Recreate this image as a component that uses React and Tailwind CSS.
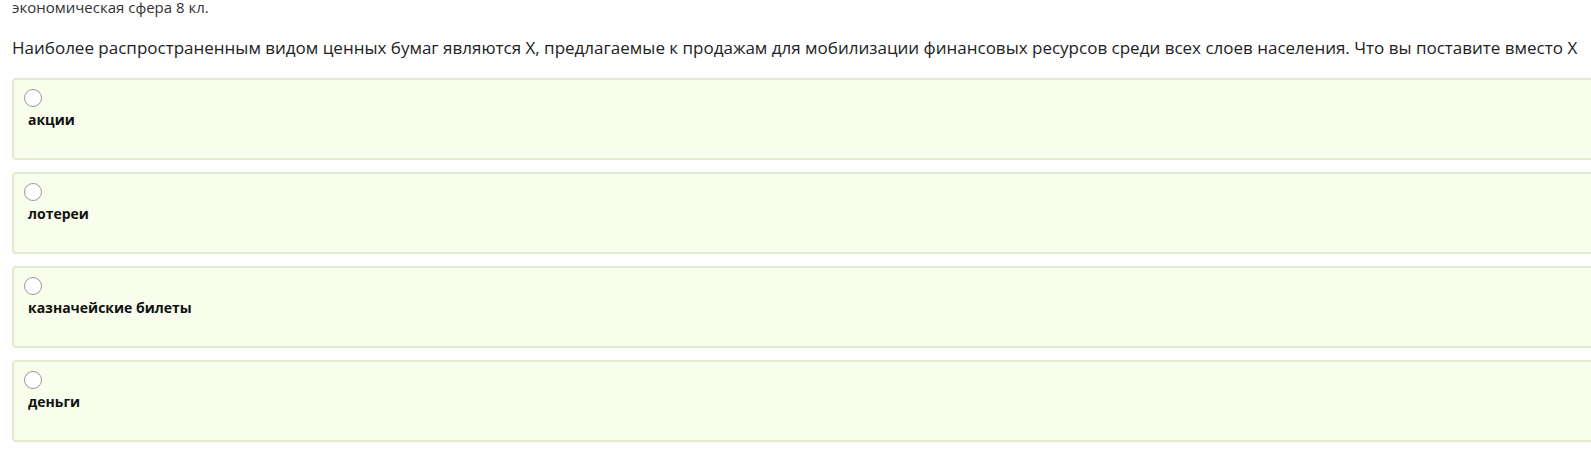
const options = ['акции', 'лотереи', 'казначейские билеты', 'деньги']

export default function App() {
  return (
    <div className="w-[1591px] h-[466px] overflow-hidden bg-white text-[#222] font-['Open_Sans','Noto_Sans',sans-serif]">
      <div className="pl-3 text-[15px] leading-[15px] text-[#333]">экономическая сфера 8 кл.</div>
      <div className="pl-3 pt-[21px] text-[17px] leading-[24px] text-[#222] whitespace-nowrap">
        Наиболее распространенным видом ценных бумаг являются X, предлагаемые к продажам для мобилизации финансовых ресурсов среди всех слоев населения. Что вы поставите вместо X
      </div>
      <div className="pl-3 pt-[18px] flex flex-col gap-[12px]">
        {options.map((o) => (
          <div
            key={o}
            className="w-[1600px] h-[82px] rounded-[4px] border-2 border-[#e1ebd2] bg-[#f8fdec] pl-[10px] pt-[9px]"
          >
            <div className="w-[18px] h-[18px] rounded-full border border-[#9a9a9a] bg-white" />
            <div className="pl-[4px] pt-[3px] text-[14px] leading-[20px] font-bold text-[#111]">{o}</div>
          </div>
        ))}
      </div>
    </div>
  )
}
